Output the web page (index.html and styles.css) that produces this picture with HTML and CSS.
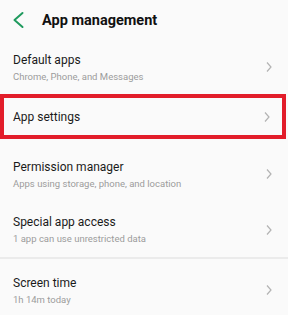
FILE: index.html
```html
<!DOCTYPE html>
<html lang="en">
<head>
    <meta charset="UTF-8">
    <meta name="viewport" content="width=device-width, initial-scale=1.0">
    <title>App management</title>
    <link rel="stylesheet" href="styles.css">
</head>
<body>
    <div class="header">
        <svg class="back" width="14" height="20" viewBox="0 0 14 20">
            <path d="M10.5 3 L2.5 10 L10.5 17" fill="none" stroke="#1f9a5e" stroke-width="2" stroke-linecap="round" stroke-linejoin="round"/>
        </svg>
        <h1>App management</h1>
    </div>

    <div class="row r1">
        <div class="text">
            <p class="title">Default apps</p>
            <p class="sub">Chrome, Phone, and Messages</p>
        </div>
        <svg class="chev" width="8" height="12" viewBox="0 0 8 12"><path d="M2 1.5 L6 6 L2 10.5" fill="none" stroke="#b3b3b3" stroke-width="1.2"/></svg>
    </div>

    <div class="row r2 marked">
        <div class="text">
            <p class="title">App settings</p>
        </div>
        <svg class="chev" width="8" height="12" viewBox="0 0 8 12"><path d="M2 1.5 L6 6 L2 10.5" fill="none" stroke="#b3b3b3" stroke-width="1.2"/></svg>
    </div>

    <div class="row r3">
        <div class="text">
            <p class="title">Permission manager</p>
            <p class="sub">Apps using storage, phone, and location</p>
        </div>
        <svg class="chev" width="8" height="12" viewBox="0 0 8 12"><path d="M2 1.5 L6 6 L2 10.5" fill="none" stroke="#b3b3b3" stroke-width="1.2"/></svg>
    </div>

    <div class="row r4">
        <div class="text">
            <p class="title">Special app access</p>
            <p class="sub">1 app can use unrestricted data</p>
        </div>
        <svg class="chev" width="8" height="12" viewBox="0 0 8 12"><path d="M2 1.5 L6 6 L2 10.5" fill="none" stroke="#b3b3b3" stroke-width="1.2"/></svg>
    </div>

    <div class="divider"></div>

    <div class="row r5">
        <div class="text">
            <p class="title">Screen time</p>
            <p class="sub">1h 14m today</p>
        </div>
        <svg class="chev" width="8" height="12" viewBox="0 0 8 12"><path d="M2 1.5 L6 6 L2 10.5" fill="none" stroke="#b3b3b3" stroke-width="1.2"/></svg>
    </div>
</body>
</html>
```

FILE: styles.css
```css
body {
    margin: 0;
    width: 288px;
    height: 315px;
    overflow: hidden;
    background-color: #fafafa;
    font-family: Roboto, "Noto Sans", sans-serif;
    color: #1a1a1a;
}

.header {
    height: 40px;
    display: flex;
    align-items: center;
}

.back {
    margin-left: 12px;
}

h1 {
    margin: 0 0 0 16px;
    font-size: 14.5px;
    font-weight: bold;
    color: #111;
}

.row {
    display: flex;
    align-items: center;
    justify-content: space-between;
    padding: 0 15px 0 13px;
    box-sizing: border-box;
}

.text p {
    margin: 0;
}

.title {
    font-size: 12px;
    line-height: 16px;
}

.sub {
    font-size: 9.5px;
    line-height: 13px;
    margin-top: 2px !important;
    color: #9c9c9c;
}

.chev {
    display: block;
}

.r1 { height: 54px; }

.marked {
    height: 45px;
    margin: 0 2px 0 0;
    border: 4px solid #e21d2a;
    padding: 0 11px 0 9px;
}

.r3 { height: 56px; margin-top: 7px; }
.r4 { height: 55px; }

.divider {
    height: 2px;
    background-color: #ebebeb;
}

.r5 { height: 62px; }
```
